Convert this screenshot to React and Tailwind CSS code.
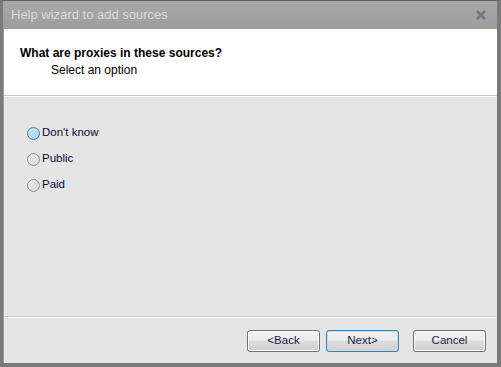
import React from "react";

function Radio({ label, active }) {
  return (
    <div className="flex items-center gap-[2px] h-[14px]">
      <span
        className={
          "w-[13px] h-[13px] rounded-full border flex items-center justify-center " +
          (active
            ? "border-[#3c7fb1] bg-[radial-gradient(circle_at_40%_40%,#e6f3fb,#8cc4e8)]"
            : "border-[#8e8f8f] bg-[radial-gradient(circle_at_40%_40%,#ffffff,#c8c8c8)]")
        }
      >
        <span
          className={
            "w-[7px] h-[7px] rounded-full " +
            (active ? "bg-[#b8dbf2]" : "bg-[#e0e0e0]")
          }
        />
      </span>
      <span className="text-[11.5px] text-[#0a0a3a] leading-none">{label}</span>
    </div>
  );
}

function Button({ children, focused }) {
  return (
    <button
      className={
        "block w-[73px] h-[22px] rounded-[3px] border text-[11.5px] text-[#1a1a4e] bg-[linear-gradient(#f2f2f2_0%,#ebebeb_45%,#dddddd_50%,#cfcfcf_100%)] " +
        (focused
          ? "border-[#3c7fb1] shadow-[inset_0_0_0_1px_#b9e0f7]"
          : "border-[#707070] shadow-[inset_0_0_0_1px_#fbfbfb]")
      }
    >
      {children}
    </button>
  );
}

export default function App() {
  return (
    <div
      className="w-[501px] h-[367px] flex flex-col bg-[#9c9c9c] border-t border-[#5e5e5e] border-l-[3px] border-l-[#7a7a7a] border-r-[4px] border-r-[#7a7a7a] border-b-[4px] border-b-[#7a7a7a]"
      style={{ fontFamily: "'Liberation Sans', sans-serif" }}
    >
      <div className="h-[28px] flex items-center justify-between pl-[8px] pr-[10px] bg-[linear-gradient(#a8a8a8,#9d9d9d)]">
        <span className="text-[13px] text-[#dcdcdc]">Help wizard to add sources</span>
        <svg width="12" height="12" viewBox="0 0 12 12">
          <path d="M2 2 L10 10 M10 2 L2 10" stroke="#6c7a88" strokeWidth="2.6" />
        </svg>
      </div>
      <div className="flex-1 flex flex-col bg-[#e5e5e5] ml-[1px]">
        <div className="h-[66px] bg-white pl-[16px] pt-[17px]">
          <div className="text-[12px] font-bold text-black leading-[15px]">
            What are proxies in these sources?
          </div>
          <div className="text-[12px] text-black pl-[31px] leading-[15px] mt-[2px]">
            Select an option
          </div>
        </div>
        <div className="h-[1px] bg-[#c6c6c6]" />
        <div className="h-[1px] bg-white" />
        <div className="flex-1 flex flex-col gap-[12px] pl-[23px] pt-[29px]">
          <Radio label="Don't know" active />
          <Radio label="Public" />
          <Radio label="Paid" />
        </div>
        <div className="h-[1px] bg-[#c6c6c6]" />
        <div className="h-[1px] bg-white" />
        <div className="h-[45px] flex items-start justify-end pr-[11px] pt-[12px]">
          <div className="flex gap-[6px]">
            <Button>&lt;Back</Button>
            <Button focused>Next&gt;</Button>
          </div>
          <div className="flex ml-[14px]">
            <Button>Cancel</Button>
          </div>
        </div>
      </div>
    </div>
  );
}
